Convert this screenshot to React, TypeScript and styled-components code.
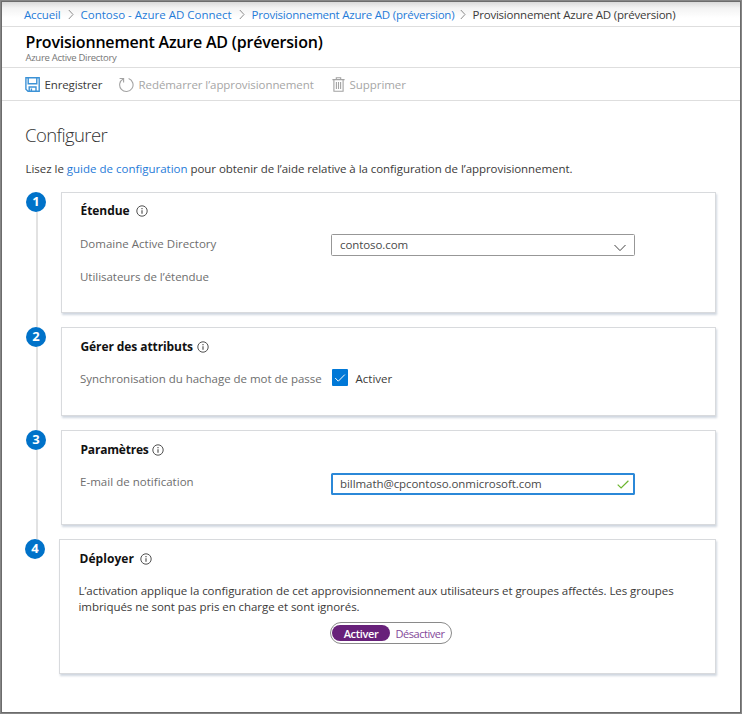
import React from "react";
import styled, { createGlobalStyle } from "styled-components";

const GlobalStyle = createGlobalStyle`
  * { box-sizing: border-box; }
  body {
    margin: 0;
    background: #fff;
    font-family: "Open Sans", "Noto Sans", sans-serif;
    font-size: 11.5px;
    line-height: 16px;
    color: #3b3a39;
  }
`;

const Frame = styled.div`
  width: 742px;
  height: 714px;
  border: 1px solid #868686;
`;

const Window = styled.div`
  height: 100%;
  border: 1px solid #6c6c6c;
  background: #fff;
  overflow: hidden;
  white-space: nowrap;
`;

const Text = styled.span<{ $ls?: number }>`
  letter-spacing: ${(p) => p.$ls ?? 0}px;
`;

const Link = styled.a<{ $ls?: number }>`
  color: #1f7bd8;
  text-decoration: none;
  letter-spacing: ${(p) => p.$ls ?? 0}px;
`;

const Breadcrumb = styled.nav`
  display: flex;
  align-items: flex-start;
  height: 25px;
  padding: 5px 0 0 22px;
  border-bottom: 1px solid #dedede;
  background: linear-gradient(#dadada, #f3f3f3 6px, #fff 16px);
`;

const Crumb = styled.div<{ $width: number }>`
  flex: none;
  width: ${(p) => p.$width}px;
`;

const CrumbArrow = styled.svg`
  flex: none;
  width: 6px;
  height: 11px;
  margin: 2px 7px 0 6px;
  fill: none;
  stroke: #8c8c8c;
`;

const Header = styled.header`
  height: 41px;
  padding: 5px 0 0 23.5px;
  border-bottom: 1px solid #dedede;
`;

const Title = styled.h1`
  margin: 0;
  font-size: 16px;
  font-weight: 600;
  line-height: 20px;
  letter-spacing: -0.2px;
  color: #000;
`;

const Subtitle = styled.div`
  font-size: 9.5px;
  line-height: 12px;
  letter-spacing: -0.3px;
  color: #767676;
`;

const Toolbar = styled.div`
  display: flex;
  align-items: flex-start;
  height: 33px;
  padding: 8px 0 0 23px;
  border-bottom: 1px solid #dedede;
`;

const Command = styled.button<{ $width: number; $disabled?: boolean }>`
  display: flex;
  flex: none;
  width: ${(p) => p.$width}px;
  padding: 0;
  border: 0;
  background: none;
  font: inherit;
  text-align: left;
  color: ${(p) => (p.$disabled ? "#a6a6a6" : "#3b3a39")};
  gap: 4.5px;

  svg {
    flex: none;
    margin-top: 1px;
    fill: none;
  }

  span {
    margin-top: 1px;
  }
`;

const Content = styled.main`
  padding: 22px 0 0 24px;
`;

const Heading = styled.h2`
  margin: 0 0 0 -1px;
  font-size: 18.5px;
  font-weight: 300;
  line-height: 24px;
  letter-spacing: -0.6px;
  color: #333;
`;

const Intro = styled.p`
  margin: 14px 0 15px -0.5px;
`;

const Step = styled.section<{ $height: number; $outdent?: number }>`
  display: flex;
  height: ${(p) => p.$height}px;
  margin-left: ${(p) => -(p.$outdent ?? 0)}px;
`;

const Rail = styled.div<{ $width: number }>`
  display: flex;
  flex-direction: column;
  flex: none;
  width: ${(p) => p.$width}px;
`;

const Badge = styled.div`
  flex: none;
  width: 20px;
  height: 20px;
  border-radius: 50%;
  background: #0072c9;
  color: #fff;
  font-size: 13px;
  font-weight: 700;
  line-height: 19px;
  text-align: center;
`;

const RailLine = styled.div`
  flex: 1;
  width: 2px;
  margin-left: 10px;
  background: #e2e2e2;
`;

const Card = styled.div<{ $height: number; $top?: number }>`
  flex: none;
  width: 655px;
  height: ${(p) => p.$height}px;
  padding: ${(p) => p.$top ?? 11}px 0 0 18px;
  border: 1px solid #d8dadd;
  box-shadow: 1px 2px 2px rgba(120, 140, 165, 0.35);
  background: #fff;
`;

const WideCard = styled(Card)`
  width: 657px;
  padding-left: 19px;
`;

const CardTitle = styled.h3<{ $gap: number; $ls: number }>`
  display: flex;
  align-items: center;
  gap: ${(p) => p.$gap}px;
  height: 16px;
  margin: 0 0 0 0.5px;
  font-size: 12px;
  font-weight: 700;
  letter-spacing: ${(p) => p.$ls}px;
  color: #111;
`;

const Field = styled.div<{ $top: number }>`
  display: grid;
  grid-template-columns: 251px auto;
  justify-content: start;
  margin-top: ${(p) => p.$top}px;
`;

const Label = styled.label<{ $ls?: number; $top?: number }>`
  padding-top: ${(p) => p.$top ?? 2}px;
  letter-spacing: ${(p) => p.$ls ?? 0}px;
  color: #6e6e6e;
`;

const InputBox = styled.div<{ $focused?: boolean }>`
  display: flex;
  align-items: center;
  justify-content: space-between;
  width: 304px;
  height: 22px;
  padding: ${(p) => (p.$focused ? "0 4px 0 7px" : "0 8px 0 8px")};
  border: ${(p) => (p.$focused ? "2px solid #2b88d8" : "1px solid #979797")};
  border-radius: 1.5px;
  color: #4a4a4a;

  svg {
    flex: none;
    fill: none;
  }
`;

const DropArrow = styled.svg`
  width: 12px;
  height: 8px;
  margin-top: 6px;
  stroke: #444;
`;

const CheckRow = styled.div`
  display: flex;
  gap: 7.5px;
  margin-left: 1px;
`;

const CheckBox = styled.span`
  display: grid;
  place-items: center;
  width: 16px;
  height: 17px;
  border-radius: 1px;
  background: #0078d7;
`;

const CheckText = styled.span`
  padding-top: 2px;
`;

const Paragraph = styled.p`
  margin: 16px 0 0 -0.5px;
  color: #3b3a39;
`;

const Toggle = styled.div`
  display: flex;
  width: 122px;
  height: 22px;
  margin: 7px 0 0 251px;
  padding: 2px 1px;
  border: 1px solid #8a8a8a;
  border-radius: 11px;
  font-size: 11px;
`;

const ToggleOption = styled.span<{ $active?: boolean }>`
  width: ${(p) => (p.$active ? 58 : 60)}px;
  height: 16px;
  border-radius: 8px;
  line-height: 18px;
  text-align: center;
  font-weight: ${(p) => (p.$active ? 600 : 400)};
  letter-spacing: ${(p) => (p.$active ? -0.35 : -0.48)}px;
  color: ${(p) => (p.$active ? "#fff" : "#84489a")};
  background: ${(p) => (p.$active ? "#68217a" : "transparent")};
`;

const Chevron = () => (
  <CrumbArrow viewBox="0 0 6 11">
    <path d="M0.8 1 L5 5.5 L0.8 10" />
  </CrumbArrow>
);

const InfoIcon = () => (
  <svg width="12" height="12" viewBox="0 0 12 12" fill="none" stroke="#484848">
    <circle cx="6" cy="6" r="5.2" strokeWidth="0.95" />
    <path d="M6 5.2V8.8M6 3.1V4.2" strokeWidth="1.1" />
  </svg>
);

const SaveIcon = () => (
  <svg width="15" height="15" viewBox="0 0 15 15" stroke="#3c92d6" strokeWidth="1.4">
    <path d="M0.9 0.8H14.2V14.2H3L0.9 12.2Z" />
    <path d="M3.2 0.8V6.8H11.8V0.8M4.2 14V10H11V14M6.4 11.6V14" />
  </svg>
);

const RestartIcon = () => (
  <svg width="16" height="16" viewBox="0 0 16 16" stroke="#a3a3a3" strokeWidth="1.1">
    <path d="M10.6 1.5A6.7 6.7 0 1 1 5.2 1.9" />
    <path d="M1.6 1.5H5.6V5.4" />
  </svg>
);

const TrashIcon = () => (
  <svg width="13" height="15" viewBox="0 0 13 15" stroke="#a3a3a3" strokeWidth="1.1">
    <path d="M0.4 2.6H12.6M4.3 2.4V0.7H8.7V2.4M1.9 2.8V14.3H11.1V2.8" />
    <path d="M4.4 5V12M6.5 5V12M8.6 5V12" />
  </svg>
);

export default function App() {
  return (
    <>
      <GlobalStyle />
      <Frame>
        <Window>
          <Breadcrumb>
            <Crumb $width={37.5}><Link href="#" $ls={-0.15}>Accueil</Link></Crumb>
            <Chevron />
            <Crumb $width={152}><Link href="#">Contoso - Azure AD Connect</Link></Crumb>
            <Chevron />
            <Crumb $width={202}><Link href="#" $ls={-0.22}>Provisionnement Azure AD (préversion)</Link></Crumb>
            <Chevron />
            <Text $ls={-0.22}>Provisionnement Azure AD (préversion)</Text>
          </Breadcrumb>

          <Header>
            <Title>Provisionnement Azure AD (préversion)</Title>
            <Subtitle>Azure Active Directory</Subtitle>
          </Header>

          <Toolbar>
            <Command $width={93}>
              <SaveIcon />
              <Text $ls={-0.13}>Enregistrer</Text>
            </Command>
            <Command $width={214} $disabled>
              <RestartIcon />
              <Text $ls={-0.07}>Redémarrer l’approvisionnement</Text>
            </Command>
            <Command $width={80} $disabled>
              <TrashIcon />
              <Text $ls={-0.05}>Supprimer</Text>
            </Command>
          </Toolbar>

          <Content>
            <Heading>Configurer</Heading>
            <Intro>
              <Text $ls={-0.03}>Lisez le </Text>
              <Link href="#">guide de configuration</Link>
              <Text $ls={-0.055}> pour obtenir de l’aide relative à la configuration de l’approvisionnement.</Text>
            </Intro>

            <Step $height={135}>
              <Rail $width={35}><Badge>1</Badge><RailLine /></Rail>
              <Card $height={121} $top={10}>
                <CardTitle $gap={6.5} $ls={-0.05}>Étendue <InfoIcon /></CardTitle>
                <Field $top={15}>
                  <Label $ls={0.01}>Domaine Active Directory</Label>
                  <InputBox>
                    <Text $ls={-0.08}>contoso.com</Text>
                    <DropArrow viewBox="0 0 12 8">
                      <path d="M0.5 1L6 6.6L11.5 1" />
                    </DropArrow>
                  </InputBox>
                </Field>
                <Field $top={11}>
                  <Label $ls={-0.03}>Utilisateurs de l’étendue</Label>
                </Field>
              </Card>
            </Step>

            <Step $height={103}>
              <Rail $width={35}><Badge>2</Badge><RailLine /></Rail>
              <Card $height={89}>
                <CardTitle $gap={4.5} $ls={-0.09}>Gérer des attributs <InfoIcon /></CardTitle>
                <Field $top={14}>
                  <Label $ls={-0.025}>Synchronisation du hachage de mot de passe</Label>
                  <CheckRow>
                    <CheckBox>
                      <svg width="12" height="10" viewBox="0 0 12 10" fill="none" stroke="#fff">
                        <path d="M1.2 5L4.3 8.2L10.8 1.6" />
                      </svg>
                    </CheckBox>
                    <CheckText>Activer</CheckText>
                  </CheckRow>
                </Field>
              </Card>
            </Step>

            <Step $height={109}>
              <Rail $width={35}><Badge>3</Badge><RailLine /></Rail>
              <Card $height={95}>
                <CardTitle $gap={3.5} $ls={-0.2}>Paramètres <InfoIcon /></CardTitle>
                <Field $top={15}>
                  <Label $ls={0.03} $top={1}>E-mail de notification</Label>
                  <InputBox $focused>
                    <Text $ls={-0.065}>billmath@cpcontoso.onmicrosoft.com</Text>
                    <svg width="12" height="9" viewBox="0 0 12 9" stroke="#6bb52d" strokeWidth="1.2">
                      <path d="M0.7 4.6L4.1 7.9L11.4 0.8" />
                    </svg>
                  </InputBox>
                </Field>
              </Card>
            </Step>

            <Step $height={135} $outdent={1}>
              <Rail $width={34}><Badge>4</Badge></Rail>
              <WideCard $height={135}>
                <CardTitle $gap={6.5} $ls={0.05}>Déployer <InfoIcon /></CardTitle>
                <Paragraph>
                  <Text $ls={-0.055}>L’activation applique la configuration de cet approvisionnement aux utilisateurs et groupes affectés. Les groupes</Text>
                  <br />
                  <Text $ls={-0.055}>imbriqués ne sont pas pris en charge et sont ignorés.</Text>
                </Paragraph>
                <Toggle>
                  <ToggleOption $active>Activer</ToggleOption>
                  <ToggleOption>Désactiver</ToggleOption>
                </Toggle>
              </WideCard>
            </Step>
          </Content>
        </Window>
      </Frame>
    </>
  );
}
